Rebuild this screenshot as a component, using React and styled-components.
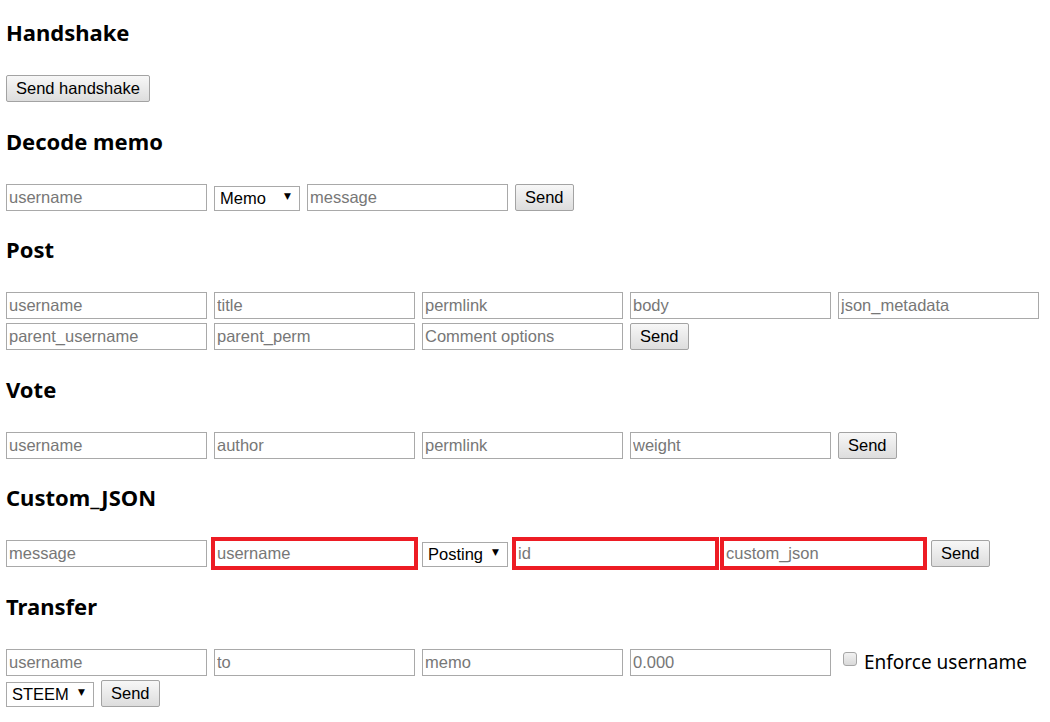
import styled, { createGlobalStyle } from "styled-components";

const GlobalStyle = createGlobalStyle`
  body {
    margin: 0;
    padding: 17px 6px 0;
    background: #fff;
    color: #000;
    font-family: "Noto Sans", "Noto Sans CJK KR", sans-serif;
    font-size: 18px;
  }
`

const Section = styled.section`
  margin-bottom: 23.5px;
`

const Heading = styled.h3`
  margin: 0 0 28px;
  font-size: 22px;
  line-height: 30px;
  font-weight: 700;
`

const Row = styled.div`
  display: flex;
  flex-wrap: wrap;
  align-items: center;
  gap: 4px 7px;
`

const Field = styled.input`
  box-sizing: border-box;
  width: 201px;
  height: 27px;
  margin: 0;
  padding: 0 2px;
  border: 1px solid #a9a9a9;
  background: #fff;
  font-family: "Liberation Sans", Arial, sans-serif;
  font-size: 16.5px;
  color: #000;
  outline: ${props => props.$marked ? "4px solid #ed1c24" : "none"};
  outline-offset: -1px;

  &::placeholder {
    color: #777;
  }
`

const Button = styled.button`
  box-sizing: border-box;
  height: 27px;
  margin: 0;
  padding: 0 9px;
  border: 1px solid #a3a3a3;
  border-radius: 2px;
  background: linear-gradient(#f7f7f7, #dddddd);
  font-family: "Liberation Sans", Arial, sans-serif;
  font-size: 16.5px;
  color: #000;
`

const SelectWrap = styled.span`
  position: relative;
  display: inline-block;
  width: ${props => props.$width}px;
  height: 25px;

  &::after {
    content: "▼";
    position: absolute;
    right: 9px;
    top: 6px;
    font-family: "DejaVu Sans", sans-serif;
    font-size: 9px;
    line-height: 10px;
    pointer-events: none;
  }
`

const Select = styled.select`
  box-sizing: border-box;
  appearance: none;
  width: 100%;
  height: 100%;
  margin: 0;
  padding: 0 0 0 5px;
  border: 1px solid #a9a9a9;
  border-radius: 0;
  background: #fff;
  font-family: "Liberation Sans", Arial, sans-serif;
  font-size: 16.5px;
  line-height: 19px;
  color: #000;
`

const CheckLabel = styled.label`
  display: flex;
  align-items: center;
  gap: 7px;
  margin-left: 5px;
  font-size: 19px;
`

const Check = styled.input`
  appearance: none;
  box-sizing: border-box;
  width: 14px;
  height: 14px;
  margin: 0 0 7px;
  border: 1px solid #a6a6a6;
  border-radius: 3px;
  background: linear-gradient(#f2f2f2, #d9d9d9);
`

function Dropdown ({ width, options }) {
  return (
    <SelectWrap $width={width}>
      <Select defaultValue={options[0]}>
        {options.map(o => <option key={o}>{o}</option>)}
      </Select>
    </SelectWrap>
  )
}

function App () {
  return (
    <>
      <GlobalStyle />
      <Section>
        <Heading>Handshake</Heading>
        <Row>
          <Button>Send handshake</Button>
        </Row>
      </Section>

      <Section>
        <Heading>Decode memo</Heading>
        <Row>
          <Field placeholder="username" />
          <Dropdown width={86} options={["Memo", "Posting", "Active"]} />
          <Field placeholder="message" />
          <Button>Send</Button>
        </Row>
      </Section>

      <Section>
        <Heading>Post</Heading>
        <Row>
          <Field placeholder="username" />
          <Field placeholder="title" />
          <Field placeholder="permlink" />
          <Field placeholder="body" />
          <Field placeholder="json_metadata" />
          <Field placeholder="parent_username" />
          <Field placeholder="parent_perm" />
          <Field placeholder="Comment options" />
          <Button>Send</Button>
        </Row>
      </Section>

      <Section>
        <Heading>Vote</Heading>
        <Row>
          <Field placeholder="username" />
          <Field placeholder="author" />
          <Field placeholder="permlink" />
          <Field placeholder="weight" />
          <Button>Send</Button>
        </Row>
      </Section>

      <Section>
        <Heading>Custom_JSON</Heading>
        <Row>
          <Field placeholder="message" />
          <Field placeholder="username" $marked />
          <Dropdown width={86} options={["Posting", "Active"]} />
          <Field placeholder="id" $marked />
          <Field placeholder="custom_json" $marked />
          <Button>Send</Button>
        </Row>
      </Section>

      <Section>
        <Heading>Transfer</Heading>
        <Row>
          <Field placeholder="username" />
          <Field placeholder="to" />
          <Field placeholder="memo" />
          <Field placeholder="0.000" />
          <CheckLabel>
            <Check type="checkbox" />
            Enforce username
          </CheckLabel>
          <Dropdown width={88} options={["STEEM", "SBD"]} />
          <Button>Send</Button>
        </Row>
      </Section>
    </>
  )
}

export default App
